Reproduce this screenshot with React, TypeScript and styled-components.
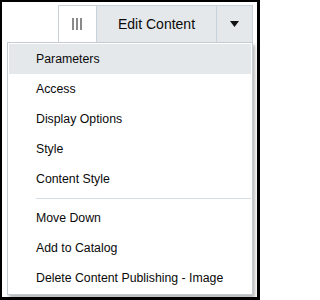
import React from 'react'
import styled, { createGlobalStyle } from 'styled-components'

const GlobalStyle = createGlobalStyle`
  html, body {
    margin: 0;
    padding: 0;
    background: #ffffff;
  }
  body {
    font-family: 'Liberation Sans', Arial, sans-serif;
  }
`

const Frame = styled.div`
  box-sizing: border-box;
  width: 260px;
  height: 300px;
  border-style: solid;
  border-color: #000000;
  border-width: 2px 3px 3px 2px;
  padding: 3px 4px 0 5px;
  background: #ffffff;
  overflow: hidden;
`

const Toolbar = styled.div`
  display: flex;
  justify-content: flex-end;
`

const ButtonSet = styled.div`
  display: flex;
  height: 37px;
  box-sizing: border-box;
  border: 1px solid #cbd3da;
  border-bottom: none;
`

const Segment = styled.div<{ $width: number; $light?: boolean }>`
  box-sizing: border-box;
  width: ${(p) => p.$width}px;
  display: flex;
  align-items: center;
  justify-content: center;
  background: ${(p) => (p.$light ? '#ffffff' : '#e5e8eb')};
  color: #0a0a0a;
  font-size: 14px;
  & + & {
    border-left: 1px solid #cbd3da;
  }
`

const Menu = styled.div`
  box-sizing: border-box;
  border: 1px solid #c3ccd4;
  padding: 1px;
  background: #ffffff;
  box-shadow: 2px 3px 3px rgba(0, 0, 0, 0.28);
`

const Item = styled.div<{ $active?: boolean }>`
  height: 30px;
  display: flex;
  align-items: center;
  padding-left: 27px;
  font-size: 12.3px;
  color: #0a0a0a;
  background: ${(p) => (p.$active ? '#e5e8eb' : 'transparent')};
`

const Divider = styled.div`
  height: 1px;
  margin: 4px 0 4px 27px;
  background: #d4dce3;
`

function Grip() {
  return (
    <svg width="11" height="12" viewBox="0 0 11 12">
      <rect x="0" y="0" width="2" height="12" fill="#8a8a8a" />
      <rect x="4" y="0" width="2" height="12" fill="#8a8a8a" />
      <rect x="8" y="0" width="2" height="12" fill="#8a8a8a" />
    </svg>
  )
}

function Caret() {
  return (
    <svg width="9" height="6" viewBox="0 0 9 6">
      <path d="M0 0 L9 0 L4.5 6 Z" fill="#111111" />
    </svg>
  )
}

const firstGroup = ['Parameters', 'Access', 'Display Options', 'Style', 'Content Style']
const secondGroup = ['Move Down', 'Add to Catalog', 'Delete Content Publishing - Image']

export default function App() {
  return (
    <Frame>
      <GlobalStyle />
      <Toolbar>
        <ButtonSet>
          <Segment $width={37} $light>
            <Grip />
          </Segment>
          <Segment $width={120}>Edit Content</Segment>
          <Segment $width={36}>
            <Caret />
          </Segment>
        </ButtonSet>
      </Toolbar>
      <Menu>
        {firstGroup.map((label, i) => (
          <Item key={label} $active={i === 0}>
            {label}
          </Item>
        ))}
        <Divider />
        {secondGroup.map((label) => (
          <Item key={label}>{label}</Item>
        ))}
      </Menu>
    </Frame>
  )
}
